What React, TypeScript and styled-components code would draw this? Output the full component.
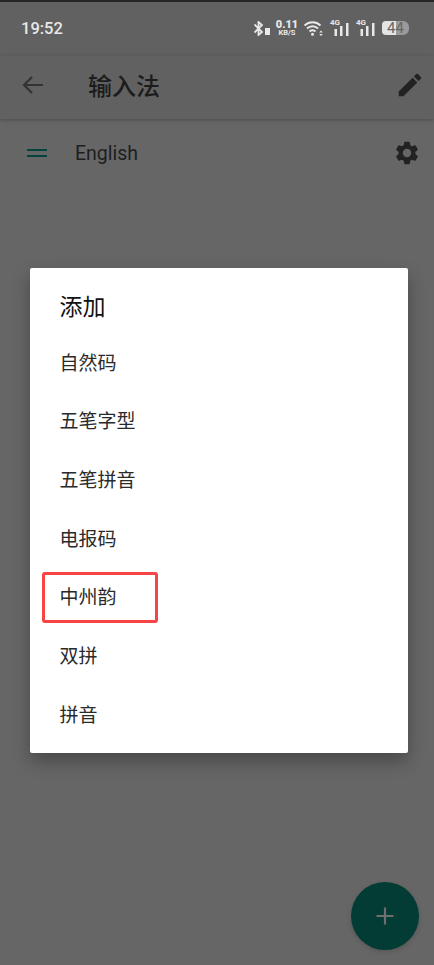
import { createGlobalStyle, styled } from "styled-components";

const GlobalStyle = createGlobalStyle`
    html, body {
        margin: 0;
        padding: 0;
        background: #666666;
    }
    * {
        box-sizing: border-box;
    }
`;

const CJK = `Roboto, "Noto Sans CJK SC", sans-serif`;

const Screen = styled.div`
    position: relative;
    width: 434px;
    height: 965px;
    overflow: hidden;
    display: flex;
    flex-direction: column;
    background: #666666;
    font-family: ${CJK};
    border-top: 2px solid #262626;
`;

const StatusBar = styled.div`
    height: 54px;
    display: flex;
    align-items: center;
    justify-content: space-between;
    padding: 0 25px 2px 21px;
    background: #616161;
    color: #e8e8e8;
`;

const Clock = styled.span`
    font-family: Roboto, sans-serif;
    font-size: 16.5px;
    font-weight: 500;
`;

const StatusIcons = styled.div`
    display: flex;
    align-items: center;
    gap: 7px;
`;

const Speed = styled.div`
    width: 18px;
    margin: 0 1px;
    display: flex;
    flex-direction: column;
    align-items: center;
    font-family: Roboto, sans-serif;
    font-weight: 700;
    & > b {
        display: block;
        font-size: 11px;
        line-height: 9px;
    }
    & > small {
        display: block;
        font-size: 7.5px;
        line-height: 7px;
    }
`;

const Signal = styled.div`
    position: relative;
    width: 19px;
    height: 15px;
    & > span {
        position: absolute;
        left: 0;
        top: -2px;
        font-family: Roboto, sans-serif;
        font-size: 8px;
        font-weight: 700;
        line-height: 8px;
    }
`;

const Battery = styled.div`
    width: 27px;
    height: 14px;
    border-radius: 4px 6px 6px 4px;
    background: linear-gradient(90deg, #e4e4e4 0 52%, #9a9a9a 52% 100%);
    color: #666666;
    font-family: Roboto, sans-serif;
    font-size: 15px;
    line-height: 14px;
    text-align: center;
`;

const AppBar = styled.header`
    height: 63px;
    display: flex;
    align-items: center;
    padding: 0 9px 6px 21px;
    background: #616161;
    box-shadow: 0 1px 4px rgba(0, 0, 0, 0.25);
    color: #1a1a1a;
`;

const Title = styled.h1`
    flex: 1;
    margin: 0 0 0 43px;
    font-size: 24px;
    font-weight: 500;
    color: #1c1c1c;
`;

const LanguageRow = styled.div`
    height: 67px;
    display: flex;
    align-items: center;
    padding: 0 13px 0 27px;
    color: #1f1f1f;
`;

const DragHandle = styled.div`
    width: 20px;
    height: 8px;
    border-top: 2.5px solid #03453c;
    border-bottom: 2.5px solid #03453c;
`;

const LanguageName = styled.span`
    flex: 1;
    margin: 2px 0 0 28px;
    font-family: Roboto, sans-serif;
    font-size: 19.5px;
    color: #1e1e1e;
`;

const Dialog = styled.div`
    position: absolute;
    left: 30px;
    top: 266px;
    width: 378px;
    height: 485px;
    padding: 23px 0 0 29.5px;
    background: #ffffff;
    border-radius: 2px;
    box-shadow: 0 8px 18px rgba(0, 0, 0, 0.3);
`;

const DialogTitle = styled.h2`
    margin: 0;
    height: 41px;
    font-size: 23px;
    line-height: 33px;
    font-weight: 400;
    color: #111111;
`;

const OptionList = styled.ul`
    list-style: none;
    margin: 0;
    padding: 0;
`;

const Option = styled.li`
    height: 58.67px;
    display: flex;
    align-items: center;
    font-size: 19px;
    color: #2a2a2a;
`;

const Highlight = styled.div`
    position: absolute;
    left: 12px;
    top: 304px;
    width: 116px;
    height: 51px;
    border: 3px solid #f84444;
    border-radius: 3px;
`;

const Fab = styled.button`
    position: absolute;
    left: 351px;
    top: 880px;
    width: 68px;
    height: 68px;
    padding: 0;
    display: flex;
    align-items: center;
    justify-content: center;
    border: none;
    border-radius: 50%;
    background: #023c35;
    box-shadow: 0 2px 5px rgba(0, 0, 0, 0.15);
`;

const options = ["自然码", "五笔字型", "五笔拼音", "电报码", "中州韵", "双拼", "拼音"];

function SignalBars() {
    return (
        <svg width="19" height="15" viewBox="0 0 19 15" fill="currentColor">
            <rect x="4.5" y="8" width="2.5" height="7" />
            <rect x="10" y="5" width="2.5" height="10" />
            <rect x="16" y="2" width="2.5" height="13" />
        </svg>
    );
}

export default function App() {
    return (
        <Screen>
            <GlobalStyle />
            <StatusBar>
                <Clock>19:52</Clock>
                <StatusIcons>
                    <svg width="16" height="15" viewBox="0 0 16 15" fill="none" stroke="currentColor" strokeWidth="1.8">
                        <path d="M0.500 3.500l7.500 7.500-3.500 3V1L8 4l-7.500 7.500" />
                        <rect x="11" y="7" width="5" height="7" fill="currentColor" stroke="none" />
                    </svg>
                    <Speed>
                        <b>0.11</b>
                        <small>KB/S</small>
                    </Speed>
                    <svg width="19" height="15" viewBox="0 0 19 15" fill="none" stroke="currentColor" strokeWidth="1.9">
                        <path d="M0.500 4.500c4.500-4.300 11.500-4.300 16 0M3 7.500c3.200-3 8-3 11 0M5.500 10.500c1.800-1.400 4.200-1.400 6 0" />
                        <circle cx="8.500" cy="13.300" r="1.500" fill="currentColor" stroke="none" />
                        <path d="M17 9.500l1.800 2h-3.600zM17 15l-1.800-2h3.600z" fill="currentColor" stroke="none" />
                    </svg>
                    <Signal>
                        <span>4G</span>
                        <SignalBars />
                    </Signal>
                    <Signal>
                        <span>4G</span>
                        <SignalBars />
                    </Signal>
                    <Battery>44</Battery>
                </StatusIcons>
            </StatusBar>
            <AppBar>
                <svg width="24" height="24" viewBox="0 0 24 24" fill="none" stroke="#333333" strokeWidth="2.200">
                    <path d="M22 12H3M11 4l-8 8 8 8" />
                </svg>
                <Title>输入法</Title>
                <svg width="30" height="30" viewBox="0 0 24 24" fill="#222222">
                    <path d="M3 17.250V21h3.750L17.810 9.940l-3.750-3.750L3 17.250zM20.710 7.040a1 1 0 0 0 0-1.410l-2.340-2.340a1 1 0 0 0-1.410 0l-1.830 1.830 3.750 3.750 1.830-1.830z" />
                </svg>
            </AppBar>
            <LanguageRow>
                <DragHandle />
                <LanguageName>English</LanguageName>
                <svg width="28" height="28" viewBox="0 0 24 24" fill="#222222">
                    <path d="M19.140 12.940c.04-.3.060-.61.060-.94 0-.32-.02-.64-.07-.94l2.030-1.580a.49.49 0 0 0 .12-.61l-1.920-3.320a.49.49 0 0 0-.59-.22l-2.390.96c-.5-.38-1.030-.7-1.620-.94l-.36-2.540a.48.480 0 0 0-.48-.41h-3.840a.48.480 0 0 0-.47.410l-.36 2.540c-.59.24-1.130.57-1.620.94l-2.390-.96a.49.49 0 0 0-.59.220L2.740 8.870a.48.480 0 0 0 .12.61l2.030 1.580c-.05.3-.09.63-.09.94s.02.64.07.94l-2.030 1.580a.49.49 0 0 0-.12.61l1.920 3.320c.12.22.37.29.59.22l2.390-.96c.5.38 1.030.7 1.620.94l.36 2.540c.05.24.24.41.48.41h3.840c.24 0 .44-.17.47-.41l.36-2.540c.59-.24 1.130-.56 1.620-.94l2.390.96c.22.08.47 0 .59-.22l1.920-3.320a.48.480 0 0 0-.12-.61l-2.010-1.580zM12 15.600a3.600 3.600 0 1 1 0-7.200 3.600 3.600 0 0 1 0 7.200z" />
                </svg>
            </LanguageRow>
            <Dialog>
                <DialogTitle>添加</DialogTitle>
                <OptionList>
                    {options.map((name) => (
                        <Option key={name}>{name}</Option>
                    ))}
                </OptionList>
                <Highlight />
            </Dialog>
            <Fab aria-label="添加">
                <svg width="20" height="20" viewBox="0 0 20 20" stroke="#6f6f6f" strokeWidth="2.200">
                    <path d="M10 1.500v17M1.500 10h17" />
                </svg>
            </Fab>
        </Screen>
    );
}
